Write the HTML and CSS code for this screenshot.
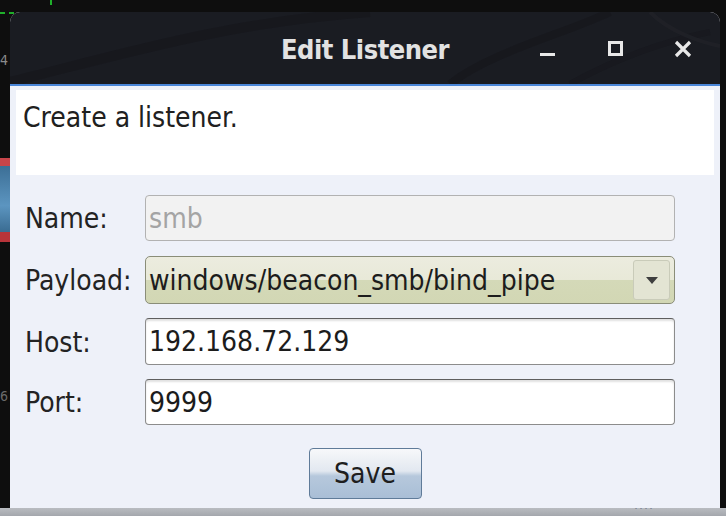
FILE: index.html
```html
<!DOCTYPE html>
<html>
<head>
<meta charset="utf-8">
<link rel="stylesheet" href="styles.css">
</head>
<body>
<div class="desktop">
  <div class="bg-dash"></div>
  <div class="bg-tick"></div>
  <div class="bg-thumb"><div class="thumb-red"></div><div class="thumb-blue"></div><div class="thumb-red2"></div></div>
  <div class="bg-glyph g4">4</div>
  <div class="bg-glyph g6">6</div>
  <div class="taskbar"><span class="dots">····</span></div>
  <div class="window">
    <div class="titlebar">
      <svg class="swoosh" width="710" height="72" viewBox="0 0 710 72">
        <path d="M0 70 C 120 40, 220 10, 360 0" stroke="#15161b" stroke-width="10" fill="none" opacity="0.6"/>
        <path d="M440 72 C 480 40, 560 20, 600 0" stroke="#15161b" stroke-width="8" fill="none" opacity="0.6"/>
        <path d="M560 72 C 600 50, 650 30, 700 20" stroke="#15161b" stroke-width="6" fill="none" opacity="0.5"/>
        <path d="M640 0 C 660 20, 690 30, 710 34" stroke="#202228" stroke-width="4" fill="none" opacity="0.8"/>
      </svg>
      <div class="title">Edit Listener</div>
      <div class="controls">
        <svg class="ctl" width="20" height="20" viewBox="0 0 20 20"><rect x="3" y="14" width="15" height="3" fill="#e8e8e8"/></svg>
        <svg class="ctl" width="20" height="20" viewBox="0 0 20 20"><rect x="4.5" y="3.5" width="12" height="12" fill="none" stroke="#e8e8e8" stroke-width="3"/></svg>
        <svg class="ctl" width="20" height="20" viewBox="0 0 20 20"><path d="M3 3 L17 17 M17 3 L3 17" stroke="#e8e8e8" stroke-width="3.2"/></svg>
      </div>
    </div>
    <div class="accent"></div>
    <div class="client">
      <div class="desc">Create a listener.</div>
      <div class="form">
        <div class="row">
          <label class="lbl">Name:</label>
          <div class="field disabled">smb</div>
        </div>
        <div class="row row-payload">
          <label class="lbl">Payload:</label>
          <div class="combo">
            <span class="combo-text">windows/beacon_smb/bind_pipe</span>
            <span class="combo-btn"><svg width="12" height="7" viewBox="0 0 12 7"><path d="M0 0 H12 L6 7 Z" fill="#3e3e3e"/></svg></span>
          </div>
        </div>
        <div class="row">
          <label class="lbl">Host:</label>
          <div class="field field-host">192.168.72.129</div>
        </div>
        <div class="row">
          <label class="lbl">Port:</label>
          <div class="field">9999</div>
        </div>
      </div>
      <div class="actions">
        <button class="btn">Save</button>
      </div>
    </div>
  </div>
</div>
</body>
</html>
```
FILE: styles.css
```css
html, body {
  margin: 0;
  padding: 0;
  background: #0d0d0d;
}
.desktop {
  position: relative;
  width: 726px;
  height: 516px;
  overflow: hidden;
  background: #0e0e0e;
  padding: 12px 0 0 10px;
  box-sizing: border-box;
  font-family: "DejaVu Sans Condensed", "DejaVu Sans", sans-serif;
  font-stretch: condensed;
}
.bg-dash {
  position: absolute;
  left: 0; top: 12px;
  width: 24px; height: 2px;
  background: repeating-linear-gradient(90deg, #1fae2a 0 5px, transparent 5px 9px);
}
.bg-tick {
  position: absolute;
  left: 50px; top: 0;
  width: 2px; height: 5px;
  background: #1fae2a;
}
.bg-thumb {
  position: absolute;
  left: 0; top: 158px;
  width: 10px; height: 84px;
  display: flex;
  flex-direction: column;
}
.thumb-red { height: 8px; background: #c8454a; }
.thumb-blue { flex: 1; background: linear-gradient(180deg, #3c6f96, #5c95c0 60%, #3a6c92); }
.thumb-red2 { height: 10px; background: #b8343a; }
.bg-glyph {
  position: absolute;
  left: 0;
  width: 10px;
  color: #8a8a8a;
  font-size: 14px;
  line-height: 16px;
}
.g4 { top: 52px; }
.g6 { top: 388px; color: #6a6a6a; }
.taskbar {
  position: absolute;
  left: 0; right: 0; bottom: 0;
  height: 8px;
  background: linear-gradient(180deg, #b9bcc1, #a4a7ad);
}
.dots {
  position: absolute;
  left: 634px; top: -8px;
  color: #7b8592;
  font-size: 14px;
  letter-spacing: 1px;
}
.window {
  position: relative;
  width: 710px;
  height: 496px;
  background: #eef1f9;
  border-radius: 10px 10px 0 0;
  overflow: hidden;
  display: flex;
  flex-direction: column;
}
.titlebar {
  position: relative;
  height: 72px;
  background: #1a1c22;
  display: flex;
  align-items: center;
  justify-content: center;
  flex-shrink: 0;
}
.swoosh {
  position: absolute;
  left: 0; top: 0;
}
.title {
  position: relative;
  color: #e2e2e2;
  font-size: 27px;
  font-weight: bold;
  margin-top: 2px;
  letter-spacing: -0.5px;
}
.controls {
  position: absolute;
  right: 27px;
  top: 37px;
  transform: translateY(-50%);
  display: flex;
  gap: 48px;
}
.ctl { display: block; }
.accent {
  height: 2px;
  background: #4a86d8;
  flex-shrink: 0;
}
.client {
  flex: 1;
  display: flex;
  flex-direction: column;
  padding: 4px 6px 0 6px;
}
.desc {
  background: #ffffff;
  height: 85px;
  padding: 12px 0 0 7px;
  box-sizing: border-box;
  font-size: 28px;
  color: #202020;
  line-height: 32px;
}
.form {
  display: flex;
  flex-direction: column;
  gap: 14px;
  padding: 20px 0 0 9px;
}
.row {
  display: flex;
  align-items: center;
}
.row-payload { margin-top: 1px; }
.lbl {
  width: 120px;
  font-size: 28px;
  color: #232323;
  padding-top: 1px;
}
.field {
  width: 530px;
  height: 46px;
  box-sizing: border-box;
  border: 1px solid #8c8c8c;
  border-top-color: #5e5e5e;
  border-radius: 4px;
  background: #ffffff;
  box-shadow: inset 0 2px 2px rgba(0,0,0,0.12);
  font-size: 28px;
  color: #1c1c1c;
  padding: 0 0 0 3px;
  display: flex;
  align-items: center;
}
.field-host { height: 47px; }
.field.disabled {
  background: #f2f2f2;
  border-color: #b2b2b2;
  box-shadow: none;
  color: #a4a4a4;
}
.combo {
  width: 530px;
  height: 48px;
  box-sizing: border-box;
  border: 1px solid #8a8d78;
  border-radius: 5px;
  background: linear-gradient(180deg, #ececdf 0%, #e8e9d8 50%, #d4d9b8 50%, #d2d7b4 100%);
  display: flex;
  align-items: center;
  justify-content: space-between;
  padding: 0 4px 0 3px;
  font-size: 28px;
  color: #1c1c1c;
}
.combo-btn {
  width: 37px;
  height: 40px;
  box-sizing: border-box;
  border: 1px solid #c9cbb9;
  border-radius: 3px;
  background: #e3e4d3;
  display: flex;
  align-items: center;
  justify-content: center;
}
.combo-btn svg { display: block; }
.actions {
  display: flex;
  justify-content: center;
  padding-top: 23px;
}
.btn {
  width: 113px;
  height: 51px;
  box-sizing: border-box;
  border: 1px solid #5f7b99;
  border-radius: 4px;
  background: linear-gradient(180deg, #f7f8fa 0%, #e2e8f0 45%, #b6c8dc 55%, #a9bed6 100%);
  font-family: "DejaVu Sans Condensed", "DejaVu Sans", sans-serif;
  font-stretch: condensed;
  font-size: 28px;
  color: #1e1e1e;
  padding: 0;
}
```
